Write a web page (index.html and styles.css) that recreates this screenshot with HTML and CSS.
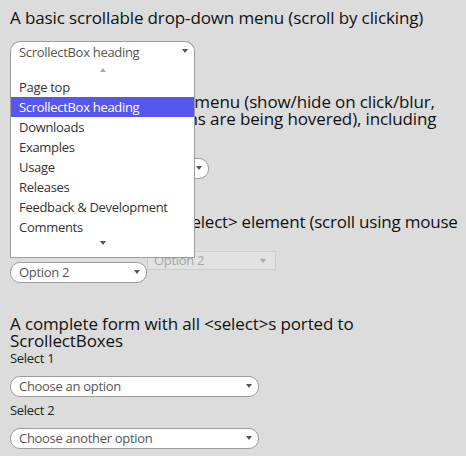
FILE: index.html
```html
<!DOCTYPE html>
<html lang="en">
<head>
<meta charset="utf-8">
<title>ScrollectBox demos</title>
<link rel="stylesheet" href="styles.css">
</head>
<body>
<section class="demo demo-basic">
  <h2 class="title">A basic scrollable drop-down menu (scroll by clicking)</h2>
  <div class="sbox sbox-open w-185">
    <div class="sbox-head">
      <span class="sbox-label">ScrollectBox heading</span>
      <span class="caret"></span>
    </div>
    <div class="sbox-menu">
      <div class="scroll-btn scroll-up is-disabled"><span class="caret caret-up"></span></div>
      <ul class="sbox-list">
        <li>Page top</li>
        <li class="is-active">ScrollectBox heading</li>
        <li>Downloads</li>
        <li>Examples</li>
        <li>Usage</li>
        <li>Releases</li>
        <li>Feedback &amp; Development</li>
        <li>Comments</li>
      </ul>
      <div class="scroll-btn scroll-down"><span class="caret"></span></div>
    </div>
  </div>
</section>

<section class="demo demo-hover">
  <h2 class="title title-lines">A scrollable drop-down menu (show/hide on click/blur,<br>scrolls, when the buttons are being hovered), including<br>keyboard support</h2>
  <div class="sbox w-199">
    <div class="sbox-head">
      <span class="sbox-label">Page top</span>
      <span class="caret"></span>
    </div>
  </div>
</section>

<section class="demo demo-select">
  <h2 class="title title-lines">A ScrollectBox with a &lt;select&gt; element (scroll using mouse<br>wheel)</h2>
  <div class="select-row">
    <div class="sbox w-137 sbox-offset">
      <div class="sbox-head">
        <span class="sbox-label">Option 2</span>
        <span class="caret"></span>
      </div>
    </div>
    <div class="native-select">
      <span>Option 2</span>
      <span class="caret caret-light"></span>
    </div>
  </div>
</section>

<section class="demo demo-form">
  <h2 class="title">A complete form with all &lt;select&gt;s ported to ScrollectBoxes</h2>
  <form class="form">
    <label class="field-label">Select 1</label>
    <div class="sbox w-249">
      <div class="sbox-head">
        <span class="sbox-label">Choose an option</span>
        <span class="caret"></span>
      </div>
    </div>
    <label class="field-label">Select 2</label>
    <div class="sbox w-249">
      <div class="sbox-head">
        <span class="sbox-label">Choose another option</span>
        <span class="caret"></span>
      </div>
    </div>
  </form>
</section>
</body>
</html>
```

FILE: styles.css
```css
html, body {
  margin: 0;
}

body {
  padding: 9px 10px 0;
  background: #dcdcdc;
  font-family: "Open Sans", "Noto Sans", sans-serif;
  color: #1a1a1a;
  overflow: hidden;
}

.title {
  margin: 0;
  font-size: 17px;
  font-weight: normal;
  line-height: 17px;
  letter-spacing: -0.13px;
  color: #111;
}

.title-lines {
  white-space: nowrap;
}

.demo-select .title {
  letter-spacing: -0.22px;
}

.demo-hover { margin-top: 31px; }
.demo-select { margin-top: 34px; }
.demo-form { margin-top: 32px; }

.demo-basic .title + .sbox { margin-top: 15px; }
.demo-hover .title + .sbox { margin-top: 14px; }

/* ScrollectBox */
.sbox {
  position: relative;
  font-size: 13px;
  letter-spacing: -0.3px;
}

.w-185 { width: 185px; }
.w-199 { width: 199px; }
.w-137 { width: 137px; }
.w-249 { width: 249px; }

.sbox-head {
  box-sizing: border-box;
  height: 21px;
  display: flex;
  align-items: center;
  justify-content: space-between;
  padding: 0 6px 0 8px;
  background: #fff;
  border: 1px solid #9c9c9c;
  border-radius: 10px;
  color: #555;
  line-height: 19px;
}

.sbox-label {
  white-space: nowrap;
}

.caret {
  width: 0;
  height: 0;
  border-left: 3.5px solid transparent;
  border-right: 3.5px solid transparent;
  border-top: 4px solid #555;
  margin-top: -2px;
}

.caret-up {
  border-top: 0;
  border-bottom: 4px solid #aaa;
  margin-top: 0;
}

.caret-light {
  border-left-width: 3px;
  border-right-width: 3px;
  border-top-color: #a8a8a8;
  margin-top: 0;
}

.sbox-open .sbox-head {
  border-bottom: 0;
  border-radius: 10px 10px 0 0;
  height: 21px;
}

.sbox-menu {
  position: absolute;
  z-index: 10;
  top: 21px;
  left: 0;
  right: 0;
  background: #fff;
  border: 1px solid #9c9c9c;
  border-top: 0;
}

.scroll-btn {
  display: flex;
  justify-content: center;
}

.scroll-up {
  height: 15px;
  align-items: center;
  padding-top: 1px;
  box-sizing: border-box;
}

.scroll-down {
  height: 20px;
  padding-top: 4px;
  box-sizing: border-box;
}

.scroll-down .caret {
  margin-top: 0;
}

.sbox-list {
  list-style: none;
  margin: 0;
  padding: 0;
}

.sbox-list li {
  height: 20px;
  line-height: 20px;
  padding-left: 8px;
  color: #333;
  white-space: nowrap;
}

.sbox-list li.is-active {
  background: #5757ee;
  color: #fff;
}

/* select row */
.select-row {
  display: flex;
  align-items: flex-start;
  margin-top: 4px;
}

.sbox-offset {
  margin-top: 11px;
}

.native-select {
  box-sizing: border-box;
  width: 129px;
  height: 19px;
  display: flex;
  align-items: center;
  justify-content: space-between;
  padding: 0 9px 0 6px;
  background: #e2e2e2;
  border: 1px solid #cdcdcd;
  color: #a6a6a6;
  font-size: 13px;
  letter-spacing: -0.3px;
  line-height: 17px;
}

/* form */
.form {
  margin: 0;
  padding-top: 1px;
}

.field-label {
  display: block;
  font-size: 13px;
  letter-spacing: -0.3px;
  line-height: 16px;
  color: #222;
  margin-bottom: 10px;
}

.form .sbox + .field-label {
  margin-top: 5px;
}
```
